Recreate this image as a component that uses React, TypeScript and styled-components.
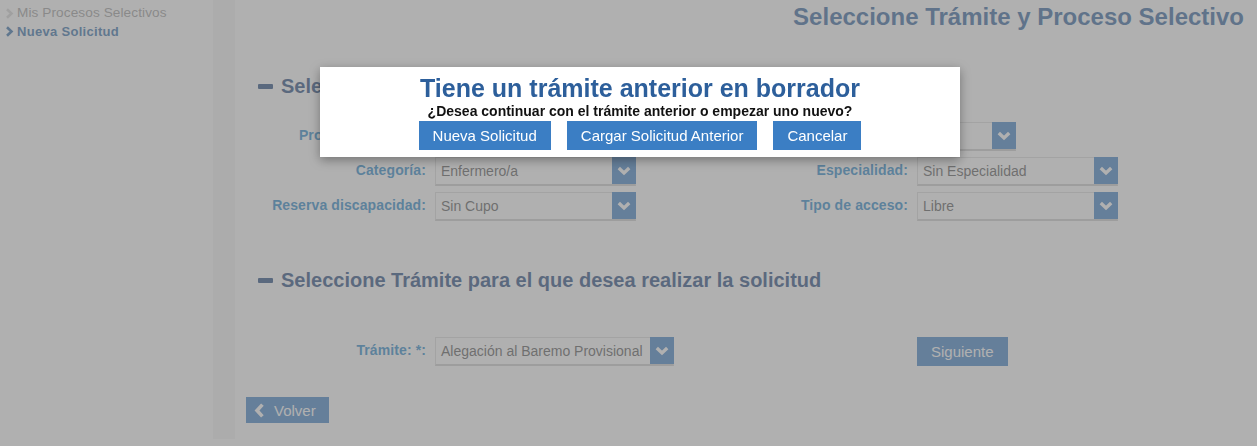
import React from "react";
import styled, { createGlobalStyle } from "styled-components";

const FONT = '"Liberation Sans", Arial, sans-serif';
const BLUE = "#3b7ec4";

const GlobalStyle = createGlobalStyle`
  html, body {
    margin: 0;
    padding: 0;
    background: #fff;
    font-family: ${FONT};
  }
`;

const ChevronRight = ({ color }: { color: string }) => (
  <svg width="9" height="11" viewBox="0 0 9 11">
    <path d="M2 1.2 L6.5 5.5 L2 9.8" fill="none" stroke={color} strokeWidth="2.6" />
  </svg>
);

const ChevronDown = () => (
  <svg width="14" height="10" viewBox="0 0 14 10">
    <path d="M1.8 2 L7 7 L12.2 2" fill="none" stroke="#fff" strokeWidth="3.4" />
  </svg>
);

const ChevronLeft = () => (
  <svg width="11" height="15" viewBox="0 0 11 15">
    <path d="M8.4 1.6 L3 7.5 L8.4 13.4" fill="none" stroke="#fff" strokeWidth="3.6" />
  </svg>
);

const Select: React.FC<{ value: string; width: number }> = ({ value, width }) => (
  <SelectBox $width={width}>
    <SelectValue>{value}</SelectValue>
    <SelectArrow>
      <ChevronDown />
    </SelectArrow>
  </SelectBox>
);

export default function App() {
  return (
    <>
      <GlobalStyle />
      <Page>
        <Sidebar>
          <NavItem>
            <ChevronRight color="#d6d6d6" />
            Mis Procesos Selectivos
          </NavItem>
          <NavItem $active>
            <ChevronRight color="#2e6aa6" />
            Nueva Solicitud
          </NavItem>
        </Sidebar>
        <Gutter />
        <Main>
          <PageTitle>Seleccione Trámite y Proceso Selectivo</PageTitle>

          <SectionHeading $top={42}>
            <MinusIcon />
            Seleccione Proceso Selectivo
          </SectionHeading>
          <FormGrid $top={24}>
            <Label>Proceso Selectivo:</Label>
            <Cell $span="2 / 5">
              <Select value="Concurso de Traslados" width={581} />
            </Cell>
            <Label>Categoría:</Label>
            <Select value="Enfermero/a" width={201} />
            <Label>Especialidad:</Label>
            <Select value="Sin Especialidad" width={201} />
            <Label>Reserva discapacidad:</Label>
            <Select value="Sin Cupo" width={201} />
            <Label>Tipo de acceso:</Label>
            <Select value="Libre" width={201} />
          </FormGrid>

          <SectionHeading $top={47}>
            <MinusIcon />
            Seleccione Trámite para el que desea realizar la solicitud
          </SectionHeading>
          <FormGrid $top={45}>
            <Label>Trámite: *:</Label>
            <Cell $span="2 / 4">
              <Select value="Alegación al Baremo Provisional" width={239} />
            </Cell>
            <Button>Siguiente</Button>
          </FormGrid>

          <BackButton>
            <ChevronLeft />
            Volver
          </BackButton>
        </Main>
      </Page>

      <Overlay />
      <Dialog>
        <DialogTitle>Tiene un trámite anterior en borrador</DialogTitle>
        <DialogText>¿Desea continuar con el trámite anterior o empezar uno nuevo?</DialogText>
        <DialogActions>
          <Button>Nueva Solicitud</Button>
          <Button>Cargar Solicitud Anterior</Button>
          <Button>Cancelar</Button>
        </DialogActions>
      </Dialog>
    </>
  );
}

const Page = styled.div`
  display: grid;
  grid-template-columns: 213px 22px 1fr;
  align-items: start;
  min-height: 446px;
`;

const Sidebar = styled.nav`
  padding: 4px 0 0 5px;
`;

const NavItem = styled.div<{ $active?: boolean }>`
  display: flex;
  align-items: center;
  gap: 3px;
  font-size: ${(p) => (p.$active ? "13px" : "13.6px")};
  line-height: 18.5px;
  font-weight: ${(p) => (p.$active ? 700 : 400)};
  letter-spacing: ${(p) => (p.$active ? "0.3px" : "0.1px")};
  color: ${(p) => (p.$active ? "#2e6aa6" : "#9a9a9a")};
`;

const Gutter = styled.div`
  height: 439px;
  background: #f5f5f5;
`;

const Main = styled.main`
  padding-right: 13px;
`;

const PageTitle = styled.h1`
  margin: 0;
  padding-top: 2px;
  text-align: right;
  font-size: 24px;
  line-height: 30px;
  font-weight: 700;
  color: #2d5f9b;
`;

const SectionHeading = styled.h2<{ $top: number }>`
  display: flex;
  align-items: center;
  gap: 8px;
  margin: ${(p) => p.$top}px 0 0;
  padding-left: 23px;
  font-size: 20px;
  line-height: 24px;
  font-weight: 700;
  color: #1f467c;
`;

const MinusIcon = styled.span`
  display: block;
  width: 15px;
  height: 5px;
  border-radius: 1px;
  background: currentColor;
`;

const FormGrid = styled.div<{ $top: number }>`
  display: grid;
  grid-template-columns: 191px 201px 263px 201px;
  grid-auto-rows: 29px;
  column-gap: 9px;
  row-gap: 6px;
  margin-top: ${(p) => p.$top}px;
`;

const Cell = styled.div<{ $span: string }>`
  grid-column: ${(p) => p.$span};
`;

const Label = styled.label`
  align-self: center;
  padding-bottom: 3px;
  text-align: right;
  font-size: 14px;
  font-weight: 700;
  letter-spacing: 0.1px;
  color: #2585c8;
`;

const SelectBox = styled.div<{ $width: number }>`
  display: flex;
  box-sizing: border-box;
  width: ${(p) => p.$width}px;
  height: 29px;
  border: 1px solid #dcdcdc;
  border-bottom: 2px solid #cdcdcd;
  background: #fff;
`;

const SelectValue = styled.span`
  flex: 1;
  overflow: hidden;
  white-space: nowrap;
  padding-left: 5px;
  font-size: 14px;
  line-height: 27px;
  color: #555;
`;

const SelectArrow = styled.span`
  display: flex;
  align-items: center;
  justify-content: center;
  width: 24px;
  margin: -1px -1px 0 0;
  background: ${BLUE};
`;

const Button = styled.button`
  height: 29px;
  padding: 0 14px;
  border: none;
  background: ${BLUE};
  color: #fff;
  font-family: ${FONT};
  font-size: 15px;
  line-height: 29px;
  justify-self: start;
`;

const BackButton = styled.button`
  display: flex;
  align-items: center;
  gap: 9px;
  height: 26px;
  margin: 31px 0 0 11px;
  padding: 0 13px 0 8px;
  border: none;
  background: ${BLUE};
  color: #fff;
  font-family: ${FONT};
  font-size: 15px;
`;

const Overlay = styled.div`
  position: fixed;
  inset: 0;
  background: rgba(128, 128, 128, 0.62);
`;

const Dialog = styled.div`
  position: fixed;
  left: 320px;
  top: 67px;
  width: 640px;
  box-sizing: border-box;
  padding: 7px 0 7px;
  background: #fff;
  text-align: center;
  box-shadow: 0 3px 10px rgba(0, 0, 0, 0.35);
`;

const DialogTitle = styled.h3`
  margin: 0;
  font-size: 25px;
  line-height: 28px;
  font-weight: 700;
  color: #2d5f9b;
`;

const DialogText = styled.p`
  margin: 2px 0 2px;
  font-size: 14px;
  line-height: 15px;
  font-weight: 700;
  color: #111;
`;

const DialogActions = styled.div`
  display: flex;
  justify-content: center;
  gap: 16px;
`;
